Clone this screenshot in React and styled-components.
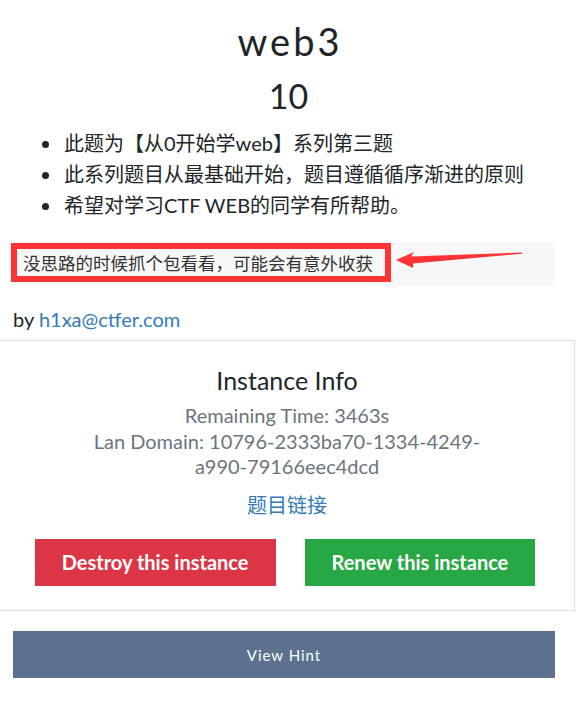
import React from "react";
import styled, { createGlobalStyle } from "styled-components";

const GlobalStyle = createGlobalStyle`
  html, body { margin: 0; padding: 0; background: #fff; }
  body {
    font-family: Lato, "Noto Sans CJK SC", sans-serif;
    color: #212529;
    overflow: hidden;
  }
  * { box-sizing: border-box; }
`;

const Page = styled.div`
  width: 577px;
  height: 707px;
  display: flex;
  flex-direction: column;
`;

const Title = styled.h2`
  margin: 18px 0 0;
  text-align: center;
  font-weight: 400;
  font-size: 38px;
  line-height: 46px;
  letter-spacing: 3px;
  padding-left: 3px;
`;

const Value = styled.h3`
  margin: 11px 0 0;
  text-align: center;
  font-weight: 400;
  font-size: 34px;
  line-height: 42px;
`;

const List = styled.ul`
  margin: 11px 0 0;
  padding-left: 62px;
  font-size: 20px;
  line-height: 31px;
  li { padding-left: 2px; }
`;

const HintBox = styled.div`
  margin: 21px 22px 0 11px;
  height: 44px;
  background: #f7f7f7;
  display: flex;
  align-items: center;
  padding-bottom: 3px;
`;

const Marked = styled.div`
  border: 6px solid #fe3434;
  height: 39px;
  display: flex;
  align-items: center;
  padding: 0 12px 0 6px;
  font-family: "Noto Sans CJK SC", sans-serif;
  font-size: 17.5px;
  color: #333;
  white-space: nowrap;
`;

const Arrow = styled.svg`
  margin-left: 5px;
  margin-top: -4px;
  flex: none;
`;

const Author = styled.p`
  margin: 20px 0 0 13px;
  font-size: 20px;
  line-height: 26px;
  a { color: #337ab7; text-decoration: none; }
`;

const Card = styled.div`
  margin: 8px 0 0 -1px;
  width: 576px;
  height: 271px;
  border: 1px solid #dedede;
  display: flex;
  flex-direction: column;
  align-items: center;
  text-align: center;
  padding-top: 24px;
`;

const CardTitle = styled.h4`
  margin: 0;
  font-size: 25px;
  font-weight: 400;
  line-height: 30px;
`;

const Muted = styled.div`
  margin-top: ${(p) => p.$gap || 0}px;
  color: #6c757d;
  font-size: 20px;
  line-height: 25.5px;
  width: 400px;
`;

const LinkText = styled.a`
  margin-top: 11px;
  color: #337ab7;
  font-size: 20px;
  line-height: 28px;
  text-decoration: none;
`;

const ButtonRow = styled.div`
  display: flex;
  gap: 29px;
  margin-top: 20px;
  margin-left: -4px;
`;

const ActionButton = styled.button`
  height: 47px;
  padding: 0 27px;
  border: none;
  border-radius: 0;
  background: ${(p) => p.$bg};
  color: #fff;
  font-family: Lato, sans-serif;
  font-weight: 700;
  font-size: 20px;
`;

const HintButton = styled.button`
  margin: 20px 22px 0 13px;
  height: 47px;
  border: none;
  background: #5c718e;
  color: #fff;
  font-family: Lato, sans-serif;
  font-size: 15px;
  letter-spacing: 1px;
`;

export default function App() {
  return (
    <Page>
      <GlobalStyle />
      <Title>web3</Title>
      <Value>10</Value>
      <List>
        <li>此题为【从0开始学web】系列第三题</li>
        <li>此系列题目从最基础开始，题目遵循循序渐进的原则</li>
        <li>希望对学习CTF WEB的同学有所帮助。</li>
      </List>
      <HintBox>
        <Marked>没思路的时候抓个包看看，可能会有意外收获</Marked>
        <Arrow width="126" height="17" viewBox="0 0 126 17">
          <polygon
            points="0,8 18,0 15,4.5 126,0.5 126,1.8 17,11.5 17,16"
            fill="#fe3434"
          />
        </Arrow>
      </HintBox>
      <Author>
        by <a href="#">h1xa@ctfer.com</a>
      </Author>
      <Card>
        <CardTitle>Instance Info</CardTitle>
        <Muted $gap={8}>Remaining Time: 3463s</Muted>
        <Muted>Lan Domain: 10796-2333ba70-1334-4249-a990-79166eec4dcd</Muted>
        <LinkText href="#">题目链接</LinkText>
        <ButtonRow>
          <ActionButton $bg="#dc3545">Destroy this instance</ActionButton>
          <ActionButton $bg="#28a745">Renew this instance</ActionButton>
        </ButtonRow>
      </Card>
      <HintButton>View Hint</HintButton>
    </Page>
  );
}
